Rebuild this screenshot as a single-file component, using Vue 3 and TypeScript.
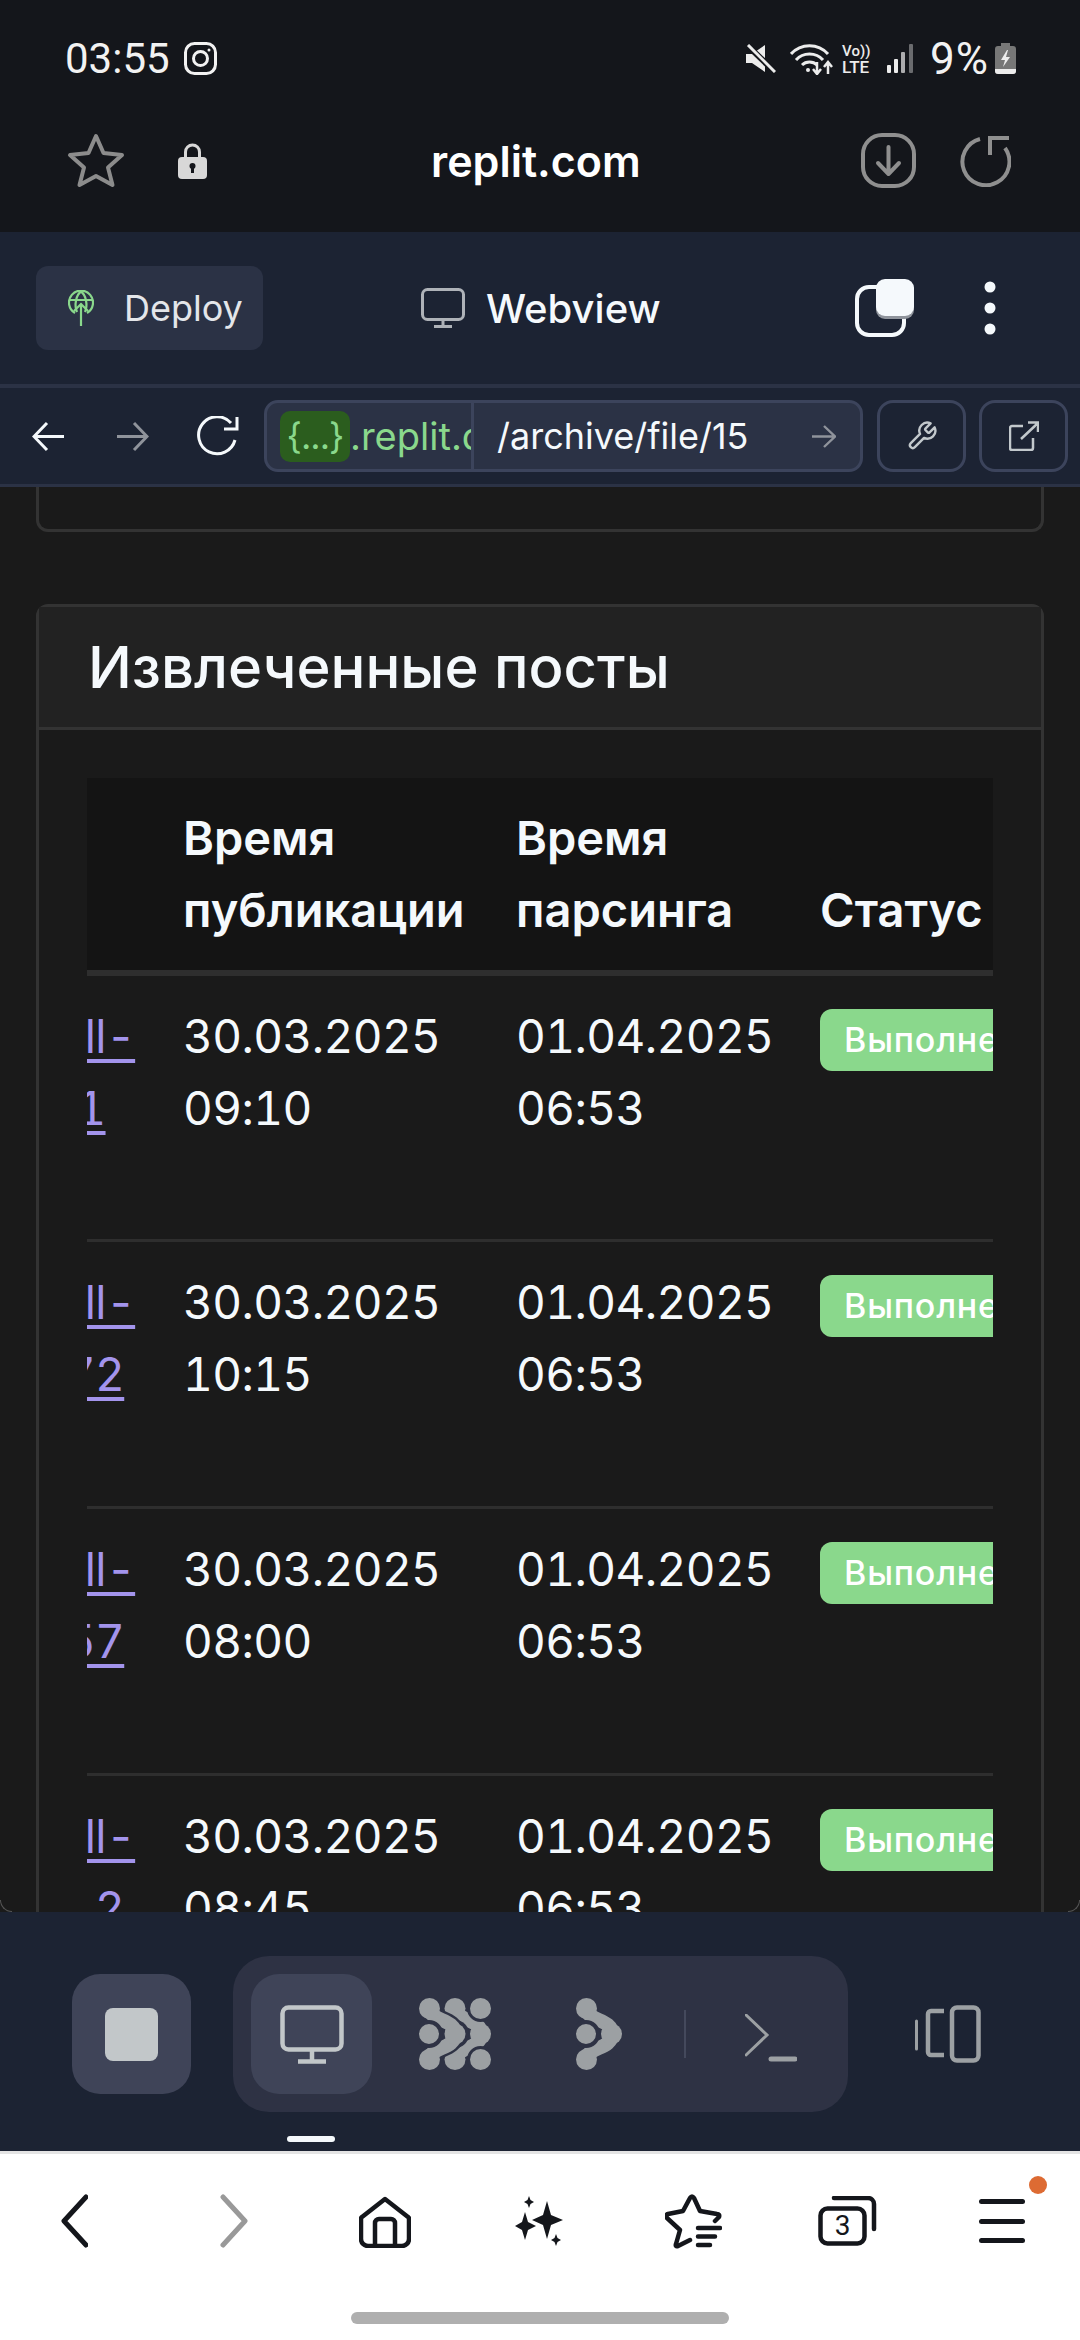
<script setup lang="ts">
import { ref, onMounted } from 'vue';

interface Post {
  lines: string[];
  published: string[];
  parsed: string[];
}

const posts: Post[] = [
  { lines: ['Hall-', 'll11'], published: ['30.03.2025', '09:10'], parsed: ['01.04.2025', '06:53'] },
  { lines: ['Hall-', 'l172'], published: ['30.03.2025', '10:15'], parsed: ['01.04.2025', '06:53'] },
  { lines: ['Hall-', 'l157'], published: ['30.03.2025', '08:00'], parsed: ['01.04.2025', '06:53'] },
  { lines: ['Hall-', 'l112'], published: ['30.03.2025', '08:45'], parsed: ['01.04.2025', '06:53'] }
];

const tableWrap = ref<HTMLElement | null>(null);

onMounted(() => {
  // таблица в оригинале прокручена вправо
  if (tableWrap.value) tableWrap.value.scrollLeft = 85;
});
</script>

<template>
  <div class="screen">
    <header class="browser-top">
      <div class="status">
        <span class="time">03:55</span>
        <svg class="insta" width="33" height="33" viewBox="0 0 33 33" fill="none" stroke="#f2f2f2" stroke-width="3">
          <rect x="1.5" y="1.5" width="30" height="30" rx="9" />
          <circle cx="16.5" cy="16.5" r="7" />
          <circle cx="25" cy="8" r="1.5" fill="#f2f2f2" stroke="none" />
        </svg>
        <div class="status-right">
          <svg width="30" height="29" viewBox="0 0 30 29" fill="#ececec">
            <path d="M0 10h6L19 1v27L6 19H0z" />
            <path d="M1 1 L29 28" stroke="#14161b" stroke-width="6" />
            <path d="M2 1 L29 28" stroke="#ececec" stroke-width="3" />
          </svg>
          <svg class="wifi" width="43" height="32" viewBox="0 0 43 32" fill="none" stroke="#ececec" stroke-width="3">
            <path d="M1 11C11 0 28 0 38 11" />
            <path d="M6 17C13 9 26 9 33 17" />
            <path d="M12 22C16 18 23 18 27 22" />
            <circle cx="18" cy="27" r="2" fill="#ececec" stroke="none" />
            <path d="M27 19v11M23 26l4 5 4-5M38 31V20M34 24l4-5 4 5" stroke-width="2.5" />
          </svg>
          <div class="volte"><span>Vo))</span><span>LTE</span></div>
          <svg class="signal" width="27" height="29" viewBox="0 0 27 29" fill="#ececec">
            <rect x="0" y="21" width="4" height="8" rx="1" />
            <rect x="7" y="15" width="4" height="14" rx="1" />
            <rect x="14" y="8" width="4" height="21" rx="1" opacity=".7" />
            <rect x="22" y="0" width="4" height="29" rx="1" opacity=".4" />
          </svg>
          <span class="percent">9%</span>
          <svg class="battery" width="21" height="31" viewBox="0 0 21 31">
            <path d="M6 0h9v3h3a3 3 0 0 1 3 3v22a3 3 0 0 1-3 3H3a3 3 0 0 1-3-3V6a3 3 0 0 1 3-3h3z" fill="#777" />
            <path d="M0 26h21v2a3 3 0 0 1-3 3H3a3 3 0 0 1-3-3z" fill="#ececec" />
            <path d="M12 7 6 17h4l-2 7 7-10h-4l2-7z" fill="#ececec" />
          </svg>
        </div>
      </div>
      <div class="address">
        <svg width="58" height="55" viewBox="0 0 58 55" fill="none" stroke="#8c8c8c" stroke-width="4" stroke-linejoin="round">
          <path d="M29 3 36.5 20 55 22 41 34.5 45.500 52 29 43 12.500 52 17 34.500 3 22 21.500 20Z" />
        </svg>
        <svg class="lock" width="29" height="36" viewBox="0 0 29 36">
          <path d="M7.5 16V9a7 7 0 0 1 14 0v7" fill="none" stroke="#d8d8d8" stroke-width="3" />
          <rect y="14" width="29" height="22" rx="4" fill="#d8d8d8" />
          <circle cx="14.5" cy="23" r="3" fill="#14161b" />
          <rect x="13" y="24" width="3" height="6" fill="#14161b" />
        </svg>
        <span class="domain">replit.com</span>
        <svg class="download" width="55" height="55" viewBox="0 0 55 55" fill="none" stroke="#8f8f8f" stroke-width="4" stroke-linecap="round" stroke-linejoin="round">
          <rect x="2" y="2" width="51" height="51" rx="19" />
          <path d="M27.5 14v26M17 30l10.5 11L38 30" />
        </svg>
        <svg class="refresh" width="52" height="52" viewBox="0 0 52 52" fill="none" stroke="#8f8f8f" stroke-width="4">
          <path d="M21 4A23.5 23.5 0 1 0 46 13" />
          <path d="M31 20V3h19" />
        </svg>
      </div>
    </header>

    <div class="repl-head">
      <button class="deploy">
        <svg width="26" height="36" viewBox="0 0 26 36" fill="none" stroke="#8ad88c" stroke-width="2.2">
          <path d="M7 23A12 12 0 1 1 19 23" />
          <path d="M9 22C6 15 8 5 13 1.500C18 5 20 15 17 22" />
          <path d="M1.500 10h23M13 36V14M6 21l7-7 7 7" />
        </svg>
        <span>Deploy</span>
      </button>
      <div class="pane-title">
        <svg width="44" height="40" viewBox="0 0 44 40" fill="none" stroke="#aeb2b8" stroke-width="3">
          <rect x="1.5" y="1.5" width="41" height="30" rx="5" />
          <path d="M22 32v6M13 38.5h18" />
        </svg>
        <span>Webview</span>
      </div>
      <svg class="tabs-icon" width="59" height="58" viewBox="0 0 59 58">
        <rect x="2" y="8" width="47" height="48" rx="12" fill="none" stroke="#f5f9fc" stroke-width="4" />
        <rect x="21" y="2" width="38" height="38" rx="9" fill="#8f949c" />
        <rect x="21" y="0" width="38" height="37" rx="9" fill="#f5f9fc" />
      </svg>
      <svg class="kebab" width="12" height="54" viewBox="0 0 12 54" fill="#f5f9fc">
        <circle cx="6" cy="6" r="5.5" />
        <circle cx="6" cy="27" r="5.5" />
        <circle cx="6" cy="48" r="5.5" />
      </svg>
    </div>

    <div class="repl-nav">
      <svg width="32" height="31" viewBox="0 0 32 31" fill="none" stroke="#f5f9fc" stroke-width="3">
        <path d="M32 15.5H3M15 2 2 15.5 15 29" />
      </svg>
      <svg class="nav-forward" width="32" height="31" viewBox="0 0 32 31" fill="none" stroke="#8f939b" stroke-width="3">
        <path d="M0 15.5h29M17 2l13 13.5L17 29" />
      </svg>
      <svg class="nav-reload" width="45" height="40" viewBox="0 0 45 40" fill="none" stroke="#f5f9fc" stroke-width="3">
        <path d="M37 7A18.5 18.5 0 1 0 41 24" />
        <path d="M43 1v12H30" />
      </svg>
      <div class="url">
        <div class="url-host">
          <span class="chip">{...}</span><span class="host">.replit.dev</span>
        </div>
        <span class="path">/archive/file/15</span>
        <svg width="24" height="23" viewBox="0 0 24 23" fill="none" stroke="#8f939b" stroke-width="2.4">
          <path d="M0 11.5h22M12 1l11 10.5L12 22" />
        </svg>
      </div>
      <button class="tool-btn wrench">
        <svg width="32" height="32" viewBox="0 0 24 24" fill="none" stroke="#c2c8cc" stroke-width="1.8" stroke-linejoin="round">
          <path d="M14.7 6.3a1 1 0 0 0 0 1.4l1.6 1.6a1 1 0 0 0 1.4 0l3.77-3.77a6 6 0 0 1-7.94 7.94l-6.91 6.91a2.12 2.12 0 0 1-3-3l6.91-6.91a6 6 0 0 1 7.94-7.94l-3.76 3.76z" />
        </svg>
      </button>
      <button class="tool-btn">
        <svg width="30" height="30" viewBox="0 0 30 30" fill="none" stroke="#c2c8cc" stroke-width="2.5">
          <path d="M14 5H3a2 2 0 0 0-2 2v20a2 2 0 0 0 2 2h19a2 2 0 0 0 2-2V17" />
          <path d="M12 18 29 2M19 1.5h10V11" />
        </svg>
      </button>
    </div>

    <main class="page">
      <div class="card prev-card"></div>
      <section class="card posts-card">
        <h2 class="card-title">Извлеченные посты</h2>
        <div class="card-body">
          <div ref="tableWrap" class="table-wrap">
            <table>
              <thead>
                <tr>
                  <th class="col-link"></th>
                  <th class="col-pub">Время публикации</th>
                  <th class="col-parse">Время парсинга</th>
                  <th class="col-status">Статус</th>
                </tr>
              </thead>
              <tbody>
                <tr v-for="(post, i) in posts" :key="i">
                  <td><a href="#" class="post-link">{{ post.lines[0] }}<br>{{ post.lines[1] }}</a></td>
                  <td>{{ post.published[0] }}<br>{{ post.published[1] }}</td>
                  <td>{{ post.parsed[0] }}<br>{{ post.parsed[1] }}</td>
                  <td><span class="badge">Выполнено</span></td>
                </tr>
              </tbody>
            </table>
          </div>
        </div>
      </section>
      <i class="corner corner-l"></i>
      <i class="corner corner-r"></i>
    </main>

    <div class="repl-tools">
      <div class="tools-row">
        <button class="stop"><i></i></button>
        <div class="tool-group">
          <button class="tool-active">
            <svg width="64" height="59" viewBox="0 0 64 59" fill="none" stroke="#c2c7c9" stroke-width="4.5">
              <rect x="2.5" y="2.5" width="59" height="42" rx="6" />
              <path d="M32 45v10M18 56.5h28" />
            </svg>
          </button>
          <svg class="ic-dots" width="72" height="72" viewBox="0 0 72 72" fill="none" stroke-linecap="round">
            <path d="M36 10C37 24 62 20 62 36S37 48 36 62" stroke="#9ca0a3" stroke-width="14" />
            <g fill="#9ca0a3">
              <circle cx="36" cy="10.500" r="10.500" />
              <circle cx="36" cy="61.500" r="10.500" />
              <circle cx="61.500" cy="36" r="10.500" />
            </g>
            <g fill="#9ca0a3" stroke="#2e3244" stroke-width="3">
              <circle cx="61.500" cy="10.500" r="12" />
              <circle cx="61.500" cy="61.500" r="12" />
            </g>
            <path d="M10 10C11 24 36 20 36 36S11 48 10 62" stroke="#2e3244" stroke-width="19" />
            <circle cx="36" cy="36" r="14" fill="#2e3244" />
            <path d="M10 10C11 24 36 20 36 36S11 48 10 62" stroke="#9ca0a3" stroke-width="14" />
            <g fill="#9ca0a3">
              <circle cx="10.500" cy="10.500" r="10.500" />
              <circle cx="10.500" cy="61.500" r="10.500" />
              <circle cx="36" cy="36" r="10.500" />
            </g>
            <circle cx="10" cy="36" r="12" fill="#9ca0a3" stroke="#2e3244" stroke-width="4" />
          </svg>
          <svg class="ic-node" width="46" height="72" viewBox="0 0 46 72" fill="none" stroke-linecap="round">
            <path d="M10 10C11 24 36 20 36 36S11 48 10 62" stroke="#9ca0a3" stroke-width="14" />
            <g fill="#9ca0a3">
              <circle cx="10.500" cy="10.500" r="10.500" />
              <circle cx="10.500" cy="61.500" r="10.500" />
              <circle cx="35.500" cy="36" r="10.500" />
            </g>
            <circle cx="10" cy="36" r="12" fill="#9ca0a3" stroke="#2e3244" stroke-width="4" />
          </svg>
          <i class="group-sep"></i>
          <svg class="ic-term" width="52" height="48" viewBox="0 0 52 48" fill="none" stroke="#9ca0a3" stroke-linecap="round">
            <path d="M1 1 22 21 1 41" stroke-width="3" />
            <path d="M26 45h24" stroke-width="5" />
          </svg>
        </div>
        <svg class="ic-split" width="66" height="58" viewBox="0 0 66 58" fill="none" stroke="#9ca0a3" stroke-width="4.5">
          <path d="M1.5 16v28" stroke-width="3" stroke-linecap="round" />
          <path d="M29 6H16a3 3 0 0 0-3 3v38a3 3 0 0 0 3 3h13" />
          <rect x="37" y="2.5" width="26.5" height="53" rx="5" />
        </svg>
      </div>
      <i class="tab-marker"></i>
    </div>

    <footer class="browser-bottom">
      <div class="bottom-icons">
        <svg width="27" height="54" viewBox="0 0 27 54" fill="none" stroke="#14161b" stroke-width="5" stroke-linecap="round" stroke-linejoin="round">
          <path d="M25 3 3 27l22 24" />
        </svg>
        <svg class="ic-next" width="28" height="54" viewBox="0 0 28 54" fill="none" stroke="#999" stroke-width="5" stroke-linecap="round" stroke-linejoin="round">
          <path d="M3 3l22 24L3 51" />
        </svg>
        <svg class="ic-home" width="52" height="52" viewBox="0 0 52 52" fill="none" stroke="#14161b" stroke-width="4.5" stroke-linejoin="round">
          <path d="M26 3 49 21a2 2 0 0 1 1 2v20a7 7 0 0 1-7 7H9a7 7 0 0 1-7-7V23a2 2 0 0 1 1-2z" />
          <path d="M16 50V27a4 4 0 0 1 4-4h12a4 4 0 0 1 4 4v23" />
        </svg>
        <svg class="ic-spark" width="48" height="50" viewBox="0 0 48 50" fill="#14161b">
          <path d="M32 5 36 19 48 24 36 29 32 43 28 29 17 24 28 19Z" />
          <path d="M10 16 13 26 21 30 13 34 10 44 7 34 0 30 7 26Z" />
          <path d="M14 0 15.500 4 19 6 15.500 8 14 12 12.500 8 9 6 12.500 4Z" />
          <path d="M41 38 42.500 42 46 44 42.500 46 41 50 39.500 46 36 44 39.500 42Z" />
        </svg>
        <svg class="ic-starlist" width="57" height="55" viewBox="0 0 57 55" fill="none" stroke="#14161b" stroke-width="4.5" stroke-linejoin="round" stroke-linecap="round">
          <path d="M50 27 54 23Q55 20 52 20L35 17 29 4Q27 1 25 4L18 17 3 20Q0 21 2 24L15 36 11 50Q10 53 13 52L25 46" />
          <path d="M33 34H55M33 42.500H50M33 51H45" />
        </svg>
        <div class="ic-count">
          <svg width="59" height="50" viewBox="0 0 59 50" fill="none" stroke="#14161b" stroke-width="4.500" stroke-linecap="round">
            <rect x="2.500" y="12.500" width="44" height="35" rx="7" />
            <path d="M16 2h34a6 6 0 0 1 6 6v25" />
          </svg>
          <span>3</span>
        </div>
        <div class="ic-menu">
          <i></i><i></i><i></i>
          <b class="menu-dot"></b>
        </div>
      </div>
      <i class="home-pill"></i>
    </footer>
  </div>
</template>

<style>
html, body {
  margin: 0;
  background: #14161b;
}
</style>

<style scoped>
.screen {
  width: 1080px;
  height: 2340px;
  display: flex;
  flex-direction: column;
  overflow: hidden;
  font-family: Inter, "Noto Sans", sans-serif;
  color: #f5f9fc;
}

svg {
  display: block;
  flex: none;
}

button {
  border: 0;
  padding: 0;
  font: inherit;
  color: inherit;
  background: none;
}

.browser-top {
  height: 232px;
  flex: none;
  background: #14161b;
  box-sizing: border-box;
  padding-top: 42px;
}

.status {
  height: 33px;
  display: flex;
  align-items: center;
  padding: 0 64px 0 65px;
}

.time {
  font-family: Roboto, sans-serif;
  font-size: 42px;
  color: #f2f2f2;
}

.insta {
  margin-left: 14px;
}

.status-right {
  margin-left: auto;
  display: flex;
  align-items: center;
}

.wifi {
  margin-left: 14px;
}

.volte {
  margin-left: 9px;
  width: 32px;
  display: flex;
  flex-direction: column;
  font-family: Roboto, sans-serif;
  font-weight: 500;
  color: #ececec;
  line-height: 16px;
}

.volte span:first-child {
  font-size: 15px;
}

.volte span:last-child {
  font-size: 17px;
}

.signal {
  margin-left: 13px;
}

.percent {
  margin-left: 16px;
  font-family: Roboto, sans-serif;
  font-size: 44px;
  letter-spacing: 1px;
  color: #f2f2f2;
}

.battery {
  margin-left: 6px;
}

.address {
  margin-top: 58px;
  display: flex;
  align-items: center;
  padding-left: 67px;
  height: 55px;
}

.lock {
  margin-left: 53px;
}

.domain {
  margin-left: 224px;
  font-size: 43px;
  font-weight: 600;
  color: #fff;
}

.download {
  margin-left: auto;
}

.refresh {
  margin-left: 43px;
  margin-right: 69px;
}

.repl-head {
  height: 156px;
  box-sizing: border-box;
  flex: none;
  background: #1c2333;
  border-bottom: 4px solid #2b3245;
  display: flex;
  align-items: center;
  padding-left: 36px;
}

.deploy {
  width: 227px;
  height: 84px;
  display: flex;
  align-items: center;
  gap: 30px;
  padding-left: 32px;
  box-sizing: border-box;
  border-radius: 12px;
  background: #2b3245;
  font-size: 36px;
  color: #e4e6ea;
}

.pane-title {
  margin-left: 158px;
  display: flex;
  align-items: center;
  gap: 21px;
  font-size: 40px;
  font-weight: 500;
}

.tabs-icon {
  margin-left: auto;
}

.kebab {
  margin-left: 70px;
  margin-right: 84px;
}

.repl-nav {
  height: 99px;
  box-sizing: border-box;
  flex: none;
  background: #1c2333;
  border-bottom: 3px solid #2b3245;
  display: flex;
  align-items: center;
  padding-left: 32px;
}

.nav-forward {
  margin-left: 53px;
}

.nav-reload {
  margin-left: 45px;
}

.url {
  margin-left: 25px;
  width: 599px;
  height: 72px;
  box-sizing: border-box;
  border: 3px solid #3c445c;
  border-radius: 14px;
  background: #2b3245;
  display: flex;
  align-items: center;
  overflow: hidden;
}

.url-host {
  width: 207px;
  height: 100%;
  flex: none;
  display: flex;
  align-items: center;
  padding-left: 13px;
  box-sizing: border-box;
  border-right: 3px solid #3c445c;
  overflow: hidden;
  white-space: nowrap;
  color: #8ad88c;
  font-size: 38px;
}

.chip {
  width: 70px;
  height: 51px;
  flex: none;
  display: flex;
  align-items: center;
  justify-content: center;
  background: #2b5d1e;
  border-radius: 10px;
  font-size: 36px;
  letter-spacing: -1px;
}

.path {
  margin-left: 23px;
  font-size: 36px;
  color: #f5f9fc;
  flex: 1;
}

.url svg {
  margin-right: 24px;
}

.tool-btn {
  width: 89px;
  height: 72px;
  margin-left: 13px;
  box-sizing: border-box;
  border: 3px solid #3c445c;
  border-radius: 16px;
  display: flex;
  align-items: center;
  justify-content: center;
}

.wrench {
  margin-left: 14px;
}

.page {
  height: 1425px;
  flex: none;
  position: relative;
  background: #1a1a1a;
  overflow: hidden;
  padding: 0 36px;
}

.card {
  box-sizing: border-box;
  border: 3px solid #333;
  border-radius: 12px;
  background: #1a1a1a;
}

.prev-card {
  height: 45px;
  border-top: 0;
  border-radius: 0 0 12px 12px;
}

.posts-card {
  margin-top: 72px;
}

.card-title {
  margin: 0;
  height: 123px;
  box-sizing: border-box;
  padding-left: 49px;
  display: flex;
  align-items: center;
  background: #222;
  border-bottom: 3px solid #333;
  font-size: 58px;
  font-weight: 500;
  color: #f5f9fc;
}

.card-body {
  padding: 48px 48px 0;
}

.table-wrap {
  overflow: hidden;
}

table {
  width: 1050px;
  table-layout: fixed;
  border-collapse: collapse;
  font-size: 47px;
  line-height: 72px;
}

th {
  box-sizing: border-box;
  background: #141414;
  border-bottom: 6px solid #2e2e2e;
  padding: 24px;
  text-align: left;
  vertical-align: bottom;
  font-weight: 600;
  color: #f5f9fc;
}

td {
  height: 267px;
  box-sizing: border-box;
  padding: 24px;
  vertical-align: top;
  border-bottom: 3px solid #2e2e2e;
  white-space: nowrap;
  font-size: 46px;
  letter-spacing: -0.6px;
  font-variant-numeric: tabular-nums;
}

.col-link {
  width: 157px;
}

.col-pub {
  width: 333px;
}

.col-parse {
  width: 304px;
}

.col-status {
  width: 256px;
}

.post-link {
  color: #a394ec;
  text-decoration: underline;
  text-decoration-thickness: 4px;
  text-underline-offset: 6px;
}

.badge {
  display: inline-block;
  margin-top: 9px;
  height: 62px;
  line-height: 62px;
  padding: 0 24px;
  border-radius: 12px;
  background: #8ad88c;
  color: #fff;
  font-size: 34px;
  letter-spacing: 0.8px;
  font-weight: 500;
  vertical-align: top;
}

.corner {
  position: absolute;
  bottom: 0;
  width: 12px;
  height: 12px;
  box-sizing: border-box;
  border-bottom: 1px solid #555;
}

.corner-l {
  left: 0;
  border-left: 1px solid #555;
  border-bottom-left-radius: 12px;
}

.corner-r {
  right: 0;
  border-right: 1px solid #555;
  border-bottom-right-radius: 12px;
}

.repl-tools {
  height: 239px;
  flex: none;
  background: #1c2333;
  box-sizing: border-box;
  padding-top: 44px;
}

.tools-row {
  display: flex;
  align-items: center;
  padding-left: 72px;
  height: 156px;
}

.stop {
  width: 119px;
  height: 120px;
  border-radius: 28px;
  background: #3f4458;
  display: flex;
  align-items: center;
  justify-content: center;
}

.stop i {
  width: 53px;
  height: 53px;
  border-radius: 8px;
  background: #c2c7c9;
}

.tool-group {
  margin-left: 42px;
  width: 615px;
  height: 156px;
  border-radius: 36px;
  background: #2e3244;
  display: flex;
  align-items: center;
  padding-left: 18px;
  box-sizing: border-box;
}

.tool-active {
  width: 121px;
  height: 120px;
  border-radius: 28px;
  background: #3f4458;
  display: flex;
  align-items: center;
  justify-content: center;
}

.ic-dots {
  margin-left: 47px;
}

.ic-node {
  margin-left: 85px;
}

.group-sep {
  margin-left: 62px;
  width: 2px;
  height: 48px;
  background: #44495c;
}

.ic-term {
  margin-left: 59px;
  margin-top: 8px;
}

.ic-split {
  margin-left: 67px;
}

.tab-marker {
  display: block;
  width: 48px;
  height: 6px;
  margin: 24px 0 0 287px;
  border-radius: 3px;
  background: #f5f9fc;
}

.browser-bottom {
  flex: 1;
  background: #fff;
  border-top: 3px solid #e4e4e4;
}

.bottom-icons {
  height: 97px;
  box-sizing: border-box;
  padding: 40px 0 0 61px;
  display: flex;
  align-items: flex-start;
}

.ic-next {
  margin-left: 132px;
}

.ic-home {
  margin-left: 111px;
  margin-top: 2px;
}

.ic-spark {
  margin-left: 104px;
  margin-top: 2px;
}

.ic-starlist {
  margin-left: 102px;
}

.ic-count {
  position: relative;
  margin-left: 96px;
  margin-top: 2px;
}

.ic-count span {
  position: absolute;
  left: 2px;
  top: 13px;
  width: 45px;
  text-align: center;
  font-family: Roboto, sans-serif;
  font-size: 28px;
  line-height: 34px;
  color: #14161b;
}

.ic-menu {
  position: relative;
  margin-left: 102px;
  margin-top: 5px;
  width: 46px;
  display: flex;
  flex-direction: column;
  gap: 14.500px;
}

.ic-menu i {
  display: block;
  height: 5px;
  border-radius: 3px;
  background: #14161b;
}

.menu-dot {
  position: absolute;
  left: 50px;
  top: -23px;
  width: 18px;
  height: 18px;
  border-radius: 50%;
  background: #dd6b33;
}

.home-pill {
  display: block;
  width: 378px;
  height: 12px;
  margin: 61px 0 0 351px;
  border-radius: 6px;
  background: #afafaf;
}
</style>
